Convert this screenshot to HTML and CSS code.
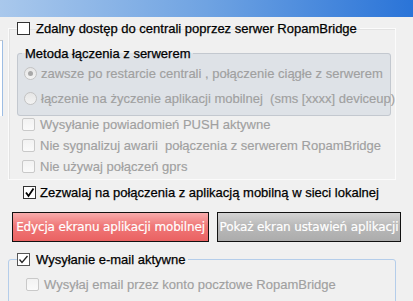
FILE: index.html
```html
<!DOCTYPE html>
<html lang="pl">
<head>
    <meta charset="UTF-8">
    <meta name="viewport" content="width=device-width, initial-scale=1.0">
    <title>RopamBridge</title>
    <link rel="stylesheet" href="styles.css">
</head>
<body>
    <div class="titlebar"></div>
    <div class="page">
        <div class="side"></div>
        <div class="main">
            <fieldset class="group">
                <legend>
                    <label class="check"><span class="box"></span>Zdalny dostęp do centrali poprzez serwer RopamBridge</label>
                </legend>
                <fieldset class="method">
                    <legend>Metoda łączenia z serwerem</legend>
                    <label class="radio off"><span class="dot on"></span>zawsze po restarcie centrali , połączenie ciągłe z serwerem</label>
                    <label class="radio off"><span class="dot"></span>łączenie na życzenie aplikacji mobilnej&nbsp; (sms [xxxx] deviceup)</label>
                </fieldset>
                <div class="options">
                    <label class="check off"><span class="box"></span>Wysyłanie powiadomień PUSH aktywne</label>
                    <label class="check off"><span class="box"></span>Nie sygnalizuj awarii&nbsp; połączenia z serwerem RopamBridge</label>
                    <label class="check off"><span class="box"></span>Nie używaj połączeń gprs</label>
                </div>
            </fieldset>

            <label class="check local">
                <span class="box checked">
                    <svg viewBox="0 0 13 13" width="13" height="13"><path d="M3 6.5 L5.5 10 L10.5 2.5" fill="none" stroke="#000" stroke-width="1.8"/></svg>
                </span>Zezwalaj na połączenia z aplikacją mobilną w sieci lokalnej
            </label>

            <div class="buttons">
                <button class="btn btn-red">Edycja ekranu aplikacji mobilnej</button>
                <button class="btn btn-grey">Pokaż ekran ustawień aplikacji</button>
            </div>

            <fieldset class="group mail">
                <legend>
                    <label class="check"><span class="box checked thin">
                        <svg viewBox="0 0 13 13" width="13" height="13"><path d="M2.5 6.5 L5 9.5 L10.5 3" fill="none" stroke="#222" stroke-width="1.3"/></svg>
                    </span>Wysyłanie e-mail aktywne</label>
                </legend>
                <label class="check off"><span class="box"></span>Wysyłaj email przez konto pocztowe RopamBridge</label>
                <div class="cut">Ustawienia konta pocztowego&nbsp; serwer SMTP&nbsp;&nbsp; port&nbsp;&nbsp; hasło</div>
            </fieldset>
        </div>
    </div>
</body>
</html>
```

FILE: styles.css
```css
body {
    margin: 0;
    width: 413px;
    height: 301px;
    overflow: hidden;
    background: #f0f0f0;
    font-family: "Liberation Sans", Arial, sans-serif;
    font-size: 13px;
    color: #000;
}

.titlebar {
    height: 17px;
    background: linear-gradient(90deg, #a9c8ec, #6fa3e2 50%, #2a74d8);
}

.page {
    display: flex;
}

.side {
    width: 2px;
    height: 75px;
    margin-top: 23px;
    background: #fff;
    border-right: 1px solid #9dbde3;
    border-top: 1px solid #c9c9c9;
}

.main {
    flex: 1;
    min-width: 0;
    margin-left: 5px;
    padding-top: 3px;
}

fieldset {
    margin: 0;
    min-width: 0;
}

legend {
    padding: 0 3px 0 0;
    line-height: 15px;
    -webkit-text-stroke: 0.25px #000;
}

.group {
    margin-right: 17px;
    padding: 9px 2px 4px 8px;
    border: 1px solid #fbfbfb;
    box-shadow: inset 1px 1px 0 #e2e2e2;
}

.check, .radio {
    display: flex;
    align-items: center;
    height: 17px;
    white-space: nowrap;
}

.check .box {
    width: 11px;
    height: 11px;
    margin-right: 6px;
    border: 1px solid #333;
    background: #fff;
    flex-shrink: 0;
    position: relative;
}

.box svg {
    position: absolute;
    left: -1px;
    top: -1px;
}

.check.off {
    color: #a0a0a0;
    margin-left: 5px;
    -webkit-text-stroke: 0.15px #a0a0a0;
}

.check.off .box {
    border-color: #c9c9c9;
    border-radius: 2px;
    background: linear-gradient(#f2f2f2, #fafafa);
    margin-right: 5px;
}

.method {
    margin-right: 2px;
    padding: 0 4px 4px 4px;
    border: 1px solid #c3c8cf;
    border-radius: 3px;
    background: #dee2e7;
}

.method legend {
    padding: 0 3px;
}

.radio {
    height: 25px;
    margin-left: 2px;
    color: #a0a0a0;
    -webkit-text-stroke: 0.15px #a0a0a0;
}

.dot {
    width: 11px;
    height: 11px;
    margin-right: 4px;
    border: 1px solid #c3c3c3;
    border-radius: 50%;
    background: linear-gradient(#e6e6e6, #f3f3f3);
    flex-shrink: 0;
    position: relative;
}

.dot.on::after {
    content: "";
    position: absolute;
    left: 3px;
    top: 3px;
    width: 5px;
    height: 5px;
    border-radius: 50%;
    background: #a8a8a8;
}

.options {
    display: flex;
    flex-direction: column;
    gap: 4px;
}

.local {
    margin: 4px 0 0 15px;
    -webkit-text-stroke: 0.25px #000;
}

.local .box {
    margin-right: 4px;
}

.buttons {
    display: flex;
    gap: 8px;
    margin: 11px 0 0 4px;
}

.btn {
    height: 30px;
    padding: 0;
    border: 1px solid #111;
    color: #fff;
    font-family: "DejaVu Sans", Verdana, sans-serif;
    font-size: 12px;
    letter-spacing: -0.15px;
    text-align: center;
    white-space: nowrap;
    -webkit-text-stroke: 0.2px #fff;
}

.btn-red {
    width: 197px;
    background: linear-gradient(#f7adad, #f07878 45%, #ea6262);
}

.btn-grey {
    width: 184px;
    background: linear-gradient(#d4d4d4, #b9b9b9 45%, #acacac);
}

.mail {
    margin-top: 9px;
    padding: 8px 2px 0 8px;
    border: 1px solid #b4cdea;
    border-radius: 3px;
    box-shadow: none;
    height: 60px;
}

.box.thin {
    border-color: #555;
}

.mail .check.off {
    margin-left: 9px;
}

.cut {
    margin: 5px 0 0 -4px;
    color: #b0b0b0;
    font-weight: bold;
    white-space: nowrap;
    overflow: hidden;
}
```
